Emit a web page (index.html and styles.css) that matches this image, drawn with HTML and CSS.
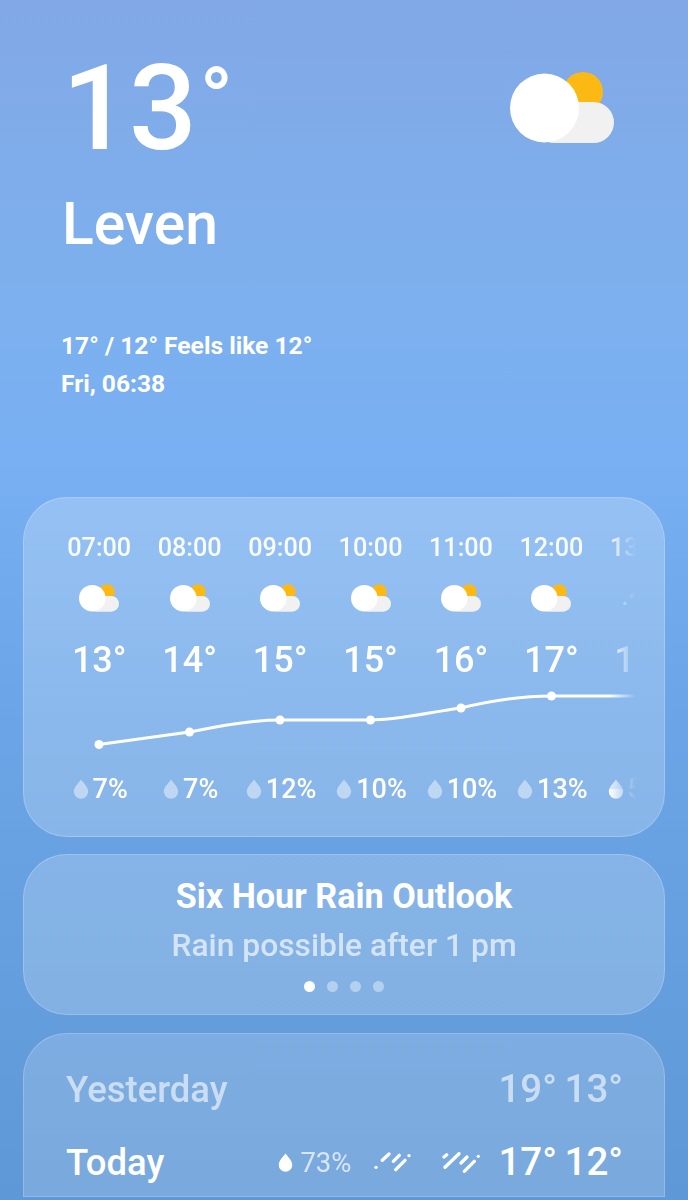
FILE: index.html
```html
<!DOCTYPE html>
<html lang="en">
<head>
<meta charset="utf-8">
<title>Weather</title>
<link rel="stylesheet" href="styles.css">
</head>
<body>
<svg class="defs" width="0" height="0" aria-hidden="true">
  <defs>
    <symbol id="partly" viewBox="0 0 104 71">
      <circle cx="73" cy="20" r="20" fill="#fdb913"/>
      <rect x="24" y="30" width="80" height="41" rx="20.500" fill="#f1f1f1"/>
      <circle cx="34.500" cy="36" r="34.500" fill="#fff"/>
    </symbol>
    <symbol id="drop" viewBox="0 0 16 20">
      <path d="M8 .5C6 3.500 .8 8 .8 12.600a7.200 7.200 0 0 0 14.400 0C15.200 8 10 3.500 8 .5Z"/>
    </symbol>
    <symbol id="rain-light" viewBox="9 9 37 20">
      <g fill="none" stroke="#fff" stroke-width="3.300" stroke-linecap="round">
        <path d="M11 24.300h.01"/>
        <path d="M17.300 17.300L24 11"/>
        <path d="M28.300 18.300L34.300 12.300"/>
        <path d="M30.700 26.700L40 17.300"/>
        <path d="M44 12.700h.01"/>
      </g>
    </symbol>
    <symbol id="rain-heavy" viewBox="77 9 38 21">
      <g fill="none" stroke="#fff" stroke-width="3.300" stroke-linecap="round">
        <path d="M79 14L81.700 11.700"/>
        <path d="M80 24.300L94 10.700"/>
        <path d="M96 20L102 14"/>
        <path d="M99.300 28.300L109.300 18.300"/>
        <path d="M113.300 13.300h.01"/>
      </g>
    </symbol>
    <linearGradient id="half-fill" x1="0" y1="0" x2="0" y2="1">
      <stop offset="50%" stop-color="#fff" stop-opacity=".75"/>
      <stop offset="50%" stop-color="#fff"/>
    </linearGradient>
  </defs>
</svg>
<main class="screen">
  <header class="hero">
    <div class="hero-top">
      <div class="temp">13<span class="deg">°</span></div>
      <svg class="hero-icon"><use href="#partly"/></svg>
    </div>
    <h1 class="city">Leven</h1>
    <p class="range">17° / 12° Feels like 12°</p>
    <p class="date">Fri, 06:38</p>
  </header>

  <section class="card hourly">
    <div class="strip">
      <div class="row times">
        <span>07:00</span><span>08:00</span><span>09:00</span><span>10:00</span><span>11:00</span><span>12:00</span><span>13:00</span>
      </div>
      <div class="row icons">
        <svg class="small-icon"><use href="#partly"/></svg>
        <svg class="small-icon"><use href="#partly"/></svg>
        <svg class="small-icon"><use href="#partly"/></svg>
        <svg class="small-icon"><use href="#partly"/></svg>
        <svg class="small-icon"><use href="#partly"/></svg>
        <svg class="small-icon"><use href="#partly"/></svg>
        <svg class="small-rain"><use href="#rain-light"/></svg>
      </div>
      <div class="row temps">
        <span>13°</span><span>14°</span><span>15°</span><span>15°</span><span>16°</span><span>17°</span><span>17°</span>
      </div>
      <svg class="chart" viewBox="0 0 633 60">
        <path class="line" d="M49 49.500L139.500 37C165 32 200 25 230 25L320.500 25C350 25 380 17 411 13C440 6 470 1 501.500 1L633 1"/>
        <g class="points">
          <circle cx="49" cy="49.500" r="4.500"/><circle cx="139.500" cy="37" r="4.500"/><circle cx="230" cy="25" r="4.500"/><circle cx="320.500" cy="25" r="4.500"/><circle cx="411" cy="13" r="4.500"/><circle cx="501.500" cy="1" r="4.500"/>
        </g>
      </svg>
      <div class="row precip">
        <span><svg class="drop"><use href="#drop"/></svg>7%</span>
        <span><svg class="drop"><use href="#drop"/></svg>7%</span>
        <span><svg class="drop"><use href="#drop"/></svg>12%</span>
        <span><svg class="drop"><use href="#drop"/></svg>10%</span>
        <span><svg class="drop"><use href="#drop"/></svg>10%</span>
        <span><svg class="drop"><use href="#drop"/></svg>13%</span>
        <span><svg class="drop half"><use href="#drop"/></svg>50%</span>
      </div>
    </div>
  </section>

  <section class="card outlook">
    <h2 class="outlook-title">Six Hour Rain Outlook</h2>
    <p class="outlook-text">Rain possible after 1 pm</p>
    <div class="dots"><i class="on"></i><i></i><i></i><i></i></div>
  </section>

  <section class="card daily">
    <div class="day past">
      <span class="day-name">Yesterday</span>
      <span class="day-temps">19° 13°</span>
    </div>
    <div class="day">
      <span class="day-name">Today</span>
      <span class="day-detail">
        <svg class="drop-today"><use href="#drop"/></svg><span class="day-pct">73%</span>
        <svg class="rain-a"><use href="#rain-light"/></svg>
        <svg class="rain-b"><use href="#rain-heavy"/></svg>
      </span>
      <span class="day-temps">17° 12°</span>
    </div>
  </section>
</main>
</body>
</html>
```
FILE: styles.css
```css
* { box-sizing: border-box; }
html, body { margin: 0; padding: 0; height: 100%; }
body {
  width: 688px;
  height: 1200px;
  overflow: hidden;
  font-family: Roboto, "Liberation Sans", sans-serif;
  color: #fff;
  background: linear-gradient(180deg, #82a8e6 0%, #7db0ee 25%, #78b0f3 38%, #6ca6e8 58%, #5f98d6 100%);
}
.defs { position: absolute; }
.screen { height: 1200px; overflow: hidden; display: flex; flex-direction: column; gap: 18px; }
.hero { flex: none; height: 479px; padding: 0 62px; }
.hero-top { display: flex; justify-content: space-between; height: 185px; }
.temp { font-size: 119.500px; line-height: 118px; margin-top: 49px; font-weight: 500; letter-spacing: -1px; }
.deg { font-size: 87px; line-height: 0; vertical-align: 20px; margin-left: 4px; }
.hero-icon { width: 104px; height: 71px; margin: 72px 12px 0 0; }
.city { font-size: 58.800px; line-height: 70px; margin: 4px 0 0; font-weight: 500; }
.range, .date { margin: 0 0 0 -1px; font-size: 24.600px; line-height: 38px; font-weight: 700; }
.range { margin-top: 68px; }
.card {
  margin: 0 23px;
  width: 642px;
  flex: none;
  border-radius: 44px;
  background: rgba(255,255,255,.17);
  border: 1px solid rgba(255,255,255,.2);
}
.hourly { height: 340px; padding-top: 32px; background: linear-gradient(180deg, rgba(255,255,255,.23), rgba(255,255,255,.21)); }
.strip {
  width: 612px;
  overflow: hidden;
  -webkit-mask-image: linear-gradient(90deg, #000 585px, transparent 612px);
  mask-image: linear-gradient(90deg, #000 585px, transparent 612px);
}
.row { display: grid; grid-template-columns: repeat(7, 90.45px); justify-items: center; padding-left: 30px; width: 700px; }
.times { font-size: 25.200px; line-height: 36px; opacity: .95; font-weight: 500; }
.icons { height: 31px; margin-top: 16px; align-items: center; }
.small-icon { width: 40px; height: 28px; }
.small-rain { width: 37px; height: 20px; opacity: .8; }
.temps { font-size: 36px; line-height: 42px; margin-top: 26px; font-weight: 500; }
.chart { display: block; width: 633px; height: 60px; margin-left: 26px; margin-top: 14px; overflow: visible; }
.line { fill: none; stroke: #fff; stroke-width: 3px; }
.points circle { fill: #fff; }
.precip { font-size: 27px; line-height: 32px; margin: 18px 0 0 1px; font-weight: 500; }
.precip span { display: flex; align-items: center; gap: 4px; }
.drop { width: 16px; height: 20px; fill: rgba(255,255,255,.45); }
.drop.half { fill: url(#half-fill); }
.outlook { height: 161px; text-align: center; padding-top: 20px; margin-top: -1px; background: rgba(255,255,255,.2); }
.outlook-title { margin: 0; font-size: 34.200px; line-height: 42px; font-weight: 700; }
.outlook-text { margin: 9px 0 0; font-size: 31.800px; line-height: 38px; opacity: .65; font-weight: 500; }
.dots { display: flex; justify-content: center; gap: 12px; margin-top: 17px; }
.dots i { width: 11px; height: 11px; border-radius: 50%; background: rgba(255,255,255,.4); }
.dots .on { background: #fff; }
.daily { height: 164px; border-radius: 44px 44px 0 0; padding: 32px 41px 0 42px; }
.day { display: flex; align-items: center; justify-content: space-between; height: 46px; margin-bottom: 27px; }
.day-name { font-size: 36.500px; font-weight: 500; }
.day-temps { font-size: 38.500px; line-height: 46px; font-weight: 500; word-spacing: -2px; }
.past { opacity: .6; }
.day-detail { display: flex; align-items: center; margin-left: auto; margin-right: 18px; }
.drop-today { width: 15px; height: 19px; fill: #fff; margin-right: 7px; }
.day-pct { font-size: 27.500px; opacity: .7; margin-right: 23px; }
.rain-a { width: 37px; height: 20px; margin-right: 31px; }
.rain-b { width: 38px; height: 21px; }
```
